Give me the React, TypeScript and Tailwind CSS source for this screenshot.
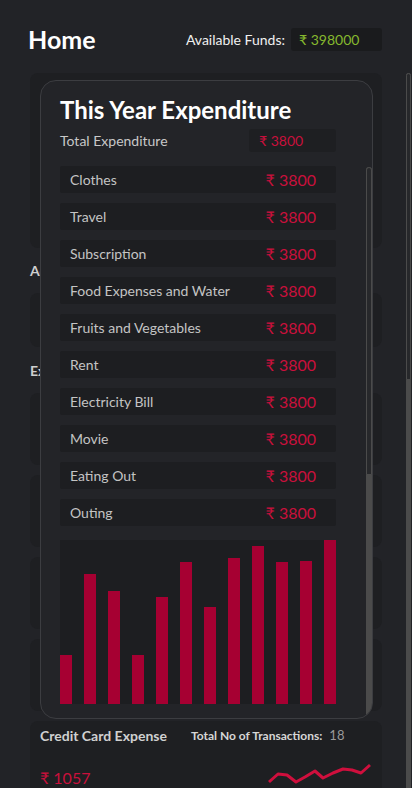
import React from 'react';

const items = [
  'Clothes',
  'Travel',
  'Subscription',
  'Food Expenses and Water',
  'Fruits and Vegetables',
  'Rent',
  'Electricity Bill',
  'Movie',
  'Eating Out',
  'Outing',
];

// bar heights in px (chart is 164 tall)
const bars = [49, 130, 113, 49, 107, 142, 97, 146, 158, 142, 143, 164];

const spark = '269,782 278,774 287,775 296,782 305,777 315,771 323,778 333,773 343,769 352,770 361,773 370,765';

const Card = ({ h }: { h: string }) => <div className={`rounded-lg bg-[#1e1f22] ${h}`} />;

export default function App() {
  return (
    <div
      className="relative w-[412px] h-[788px] overflow-hidden bg-[#222327] text-white"
      style={{ fontFamily: 'Lato, "Noto Sans", sans-serif' }}
    >
      <div className="pl-[28px] pt-[22px] pr-[30px]">
        <div className="flex items-center justify-between h-[34px]">
          <h1 className="text-[25px] font-bold leading-none">Home</h1>
          <div className="flex items-center gap-[6px]">
            <span className="text-[14px] text-[#f0f0f0]">Available Funds:</span>
            <div className="w-[91px] h-[23px] rounded-[3px] bg-[#1a1b1d] px-[8px] flex items-center text-[14px] text-[#86b82e]">
              ₹ 398000
            </div>
          </div>
        </div>

        <div className="mt-[17px] ml-[2px] flex flex-col">
          <Card h="h-[175px]" />
          <h2 className="h-[45px] flex items-center text-[14px] font-bold text-[#cfcfcf]">Accounts</h2>
          <Card h="h-[54px]" />
          <h2 className="h-[46px] flex items-center text-[14px] font-bold text-[#cfcfcf]">Expenses</h2>
          <div className="flex flex-col gap-[10px]">
            <Card h="h-[72px]" />
            <Card h="h-[72px]" />
            <Card h="h-[72px]" />
            <Card h="h-[72px]" />
            <div className="rounded-lg bg-[#1e1f22] h-[72px] px-[10px] pt-[4px]">
              <div className="flex items-center">
                <span className="w-[151px] text-[14px] font-bold text-[#d0d0d0]">Credit Card Expense</span>
                <span className="text-[12px] font-bold text-[#d6d6d6]">Total No of Transactions:</span>
                <span className="ml-[7px] text-[13px] text-[#9a9a9a]">18</span>
              </div>
              <div className="mt-[20px] text-[16px] text-[#c9103c]">₹ 1057</div>
            </div>
          </div>
        </div>
      </div>

      {/* sparkline */}
      <svg className="absolute left-0 top-0" width="412" height="788" viewBox="0 0 412 788">
        <polyline points={spark} fill="none" stroke="#cf0f3d" strokeWidth="3" strokeLinejoin="round" />
      </svg>

      {/* page scrollbar */}
      <div className="absolute right-[1px] top-[73px] bottom-0 w-[5px] bg-[#4b4b4b] rounded-t-full">
        <div className="h-[307px] rounded-t-full bg-[#27282b] border border-[#4b4b4b]" />
      </div>

      {/* modal */}
      <div className="absolute left-[40px] top-[80px] w-[333px] h-[639px] rounded-[16px] border border-[#3c3d41] bg-[#232428] overflow-hidden">
        <div className="pl-[19px] pr-[36px] pt-[13px]">
          <h2 className="text-[24px] font-bold leading-[32px]">This Year Expenditure</h2>
          <div className="mt-[3px] flex items-center justify-between">
            <span className="text-[14px] text-[#c8c8c8]">Total Expenditure</span>
            <div className="w-[87px] h-[23px] rounded-[3px] bg-[#1e1f22] px-[10px] flex items-center text-[14px] text-[#c9103c]">
              ₹ 3800
            </div>
          </div>
          <div className="mt-[14px] flex flex-col gap-[10px]">
            {items.map((it) => (
              <div key={it} className="h-[27px] rounded-[2px] bg-[#1d1e21] flex items-center justify-between pl-[10px] pr-[20px]">
                <span className="text-[14px] text-[#c4c4c4]">{it}</span>
                <span className="text-[16px] text-[#c9103c]">₹ 3800</span>
              </div>
            ))}
            <div className="mt-[4px] h-[164px] bg-[#1d1e21] flex items-end justify-between">
              {bars.map((b, i) => (
                <div key={i} className="w-[12px] bg-[#a60032]" style={{ height: b }} />
              ))}
            </div>
          </div>
        </div>
        {/* modal scrollbar */}
        <div className="absolute right-0 top-[86px] bottom-0 w-[6px] bg-[#4b4b4b] rounded-t-full">
          <div className="h-[308px] rounded-t-full bg-[#27282b] border border-[#4b4b4b]" />
        </div>
      </div>
    </div>
  );
}
